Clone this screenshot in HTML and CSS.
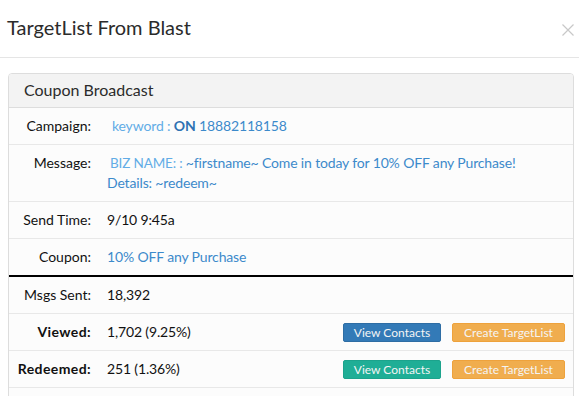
FILE: index.html
```html
<!DOCTYPE html>
<html>
<head>
<meta charset="utf-8">
<link rel="stylesheet" href="styles.css">
</head>
<body>
<div class="modal">
  <div class="modal-header">
    <h1 class="modal-title">TargetList From Blast</h1>
    <span class="close">
      <svg width="12" height="12" viewBox="0 0 12 12"><path d="M0.5 0.5 L11.5 11.5 M11.5 0.5 L0.5 11.5" stroke="#c8c8c8" stroke-width="1.2" fill="none"/></svg>
    </span>
  </div>
  <div class="modal-body">
    <div class="panel">
      <div class="panel-heading">Coupon Broadcast</div>
      <div class="row">
        <div class="label">Campaign:</div>
        <div class="value"><span class="light kw">keyword</span> <span class="light">:</span> <b class="on">ON</b> <span class="link">18882118158</span></div>
      </div>
      <div class="row">
        <div class="label">Message:</div>
        <div class="value link"><span class="light biz">BIZ NAME: :</span> ~firstname~ Come in today for 10% OFF any Purchase!<br>Details: ~redeem~</div>
      </div>
      <div class="row">
        <div class="label">Send Time:</div>
        <div class="value">9/10 9:45a</div>
      </div>
      <div class="row thick">
        <div class="label">Coupon:</div>
        <div class="value link">10% OFF any Purchase</div>
      </div>
      <div class="row">
        <div class="label">Msgs Sent:</div>
        <div class="value">18,392</div>
      </div>
      <div class="row">
        <div class="label bold">Viewed:</div>
        <div class="value">1,702 (9.25%)</div>
        <div class="actions">
          <span class="btn btn-blue">View Contacts</span>
          <span class="btn btn-orange">Create TargetList</span>
        </div>
      </div>
      <div class="row">
        <div class="label bold">Redeemed:</div>
        <div class="value">251 (1.36%)</div>
        <div class="actions">
          <span class="btn btn-green">View Contacts</span>
          <span class="btn btn-orange">Create TargetList</span>
        </div>
      </div>
      <div class="row">
        <div class="label">&nbsp;</div>
        <div class="value">&nbsp;</div>
      </div>
    </div>
  </div>
</div>
</body>
</html>
```
FILE: styles.css
```css
html, body {
  margin: 0;
  padding: 0;
  background: #fff;
  font-family: Lato, "Open Sans", sans-serif;
  color: #111;
  overflow: hidden;
}
.modal {
  width: 579px;
}
.modal-header {
  height: 57px;
  border-bottom: 1px solid #e5e5e5;
  display: flex;
  align-items: center;
  justify-content: space-between;
  padding: 0 5px 0 7px;
}
.modal-title {
  margin: 0;
  font-size: 20px;
  font-weight: 400;
  color: #2b2b2b;
  padding-bottom: 4px;
}
.close {
  display: flex;
  margin-top: 2px;
}
.modal-body {
  padding: 15px 5px 0 8px;
}
.panel {
  border: 1px solid #ddd;
  border-radius: 4px;
  background: #fcfcfc;
  overflow: hidden;
}
.panel-heading {
  background: #f3f3f3;
  border-bottom: 1px solid #ddd;
  height: 33px;
  line-height: 32px;
  padding-left: 15px;
  font-size: 16px;
  color: #2b2b2b;
}
.row {
  display: flex;
  align-items: center;
  border-bottom: 1px solid #e8e8e8;
  padding: 8px 0;
  font-size: 14px;
  line-height: 20px;
}
.row.thick {
  border-bottom: 2px solid #000;
}
.label {
  width: 82px;
  flex: none;
  text-align: right;
  color: #111;
  align-self: flex-start;
}
.label.bold {
  font-weight: 700;
  letter-spacing: 0.4px;
}
.value {
  margin-left: 16px;
  flex: 1;
  letter-spacing: -0.15px;
}
.link {
  color: #3c8acb;
}
.light {
  color: #62ace6;
}
.kw {
  margin-left: 5px;
}
.biz {
  margin-left: 3px;
  font-size: 13.5px;
}
.on {
  color: #2f72b3;
  font-weight: 700;
}
.actions {
  display: flex;
  gap: 11px;
  margin-right: 8px;
}
.btn {
  display: inline-block;
  height: 19px;
  line-height: 18px;
  font-size: 12px;
  color: #f4f4f4;
  border-radius: 2px;
  text-align: center;
  box-sizing: border-box;
}
.btn-blue {
  background: #337ab7;
  border: 1px solid #2e6da4;
  width: 98px;
}
.btn-green {
  background: #1fae96;
  border: 1px solid #1ca38c;
  width: 98px;
}
.btn-orange {
  background: #f0ad4e;
  border: 1px solid #eea23c;
  width: 113px;
}
```
